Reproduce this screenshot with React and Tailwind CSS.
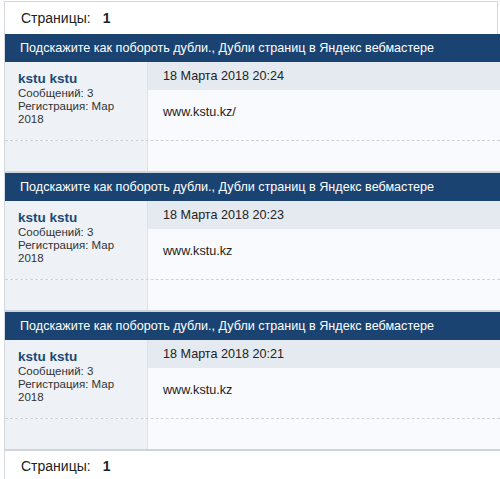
const posts = [
  { date: '18 Марта 2018 20:24', text: 'www.kstu.kz/' },
  { date: '18 Марта 2018 20:23', text: 'www.kstu.kz' },
  { date: '18 Марта 2018 20:21', text: 'www.kstu.kz' },
];

const title = 'Подскажите как побороть дубли., Дубли страниц в Яндекс вебмастере';

const Pages = ({ top }) => (
  <div
    className={`flex items-center pl-4 border-[#d3d8e0] bg-white text-[14px] text-[#222] ${
      top ? 'h-[33px] border-t border-l border-r mr-[2px]' : 'h-[30px] border-l'
    }`}
  >
    <span>Страницы:</span>
    <span className="ml-3 font-bold">1</span>
  </div>
);

const Post = ({ post }) => (
  <div className="border-l border-[#d3d8e0]">
    <div className="h-[28px] bg-[#1b4371] text-white text-[12.6px] flex items-center pl-[15px] whitespace-nowrap">
      {title}
    </div>
    <div className="flex h-[78px]">
      <div className="w-[143px] shrink-0 bg-[#eef2f7] border-r border-[#dbe1e9] pl-[13px] pt-[9px]">
        <div className="text-[13.5px] font-bold text-[#1a4a74] leading-[16px]">kstu kstu</div>
        <div className="text-[11.5px] text-[#333] leading-[13px]">Сообщений: 3</div>
        <div className="text-[11.5px] text-[#333] leading-[13px]">Регистрация: Мар</div>
        <div className="text-[11.5px] text-[#333] leading-[13px]">2018</div>
      </div>
      <div className="flex-1 flex flex-col">
        <div className="h-[28px] bg-[#e5e9f0] flex items-center pl-[15px] text-[12.6px] text-[#222]">
          {post.date}
        </div>
        <div className="flex-1 bg-[#f9fafd] flex items-center pl-[15px] text-[12.6px] text-[#222] pb-[6px]">
          {post.text}
        </div>
      </div>
    </div>
    <div className="h-px border-t border-dashed border-[#cdd2da]" />
    <div className="flex h-[32px] border-b-2 border-[#cfd3da]">
      <div className="w-[143px] shrink-0 bg-[#eef2f7] border-r border-[#dbe1e9]" />
      <div className="flex-1 bg-[#f9fafd]" />
    </div>
  </div>
);

export default function App() {
  return (
    <div
      className="w-[500px] h-[479px] overflow-hidden bg-white pl-1 pt-px"
      style={{ fontFamily: 'Tahoma, "Liberation Sans", "DejaVu Sans", sans-serif' }}
    >
      <Pages top />
      {posts.map((p, i) => (
        <Post key={i} post={p} />
      ))}
      <Pages />
    </div>
  );
}
